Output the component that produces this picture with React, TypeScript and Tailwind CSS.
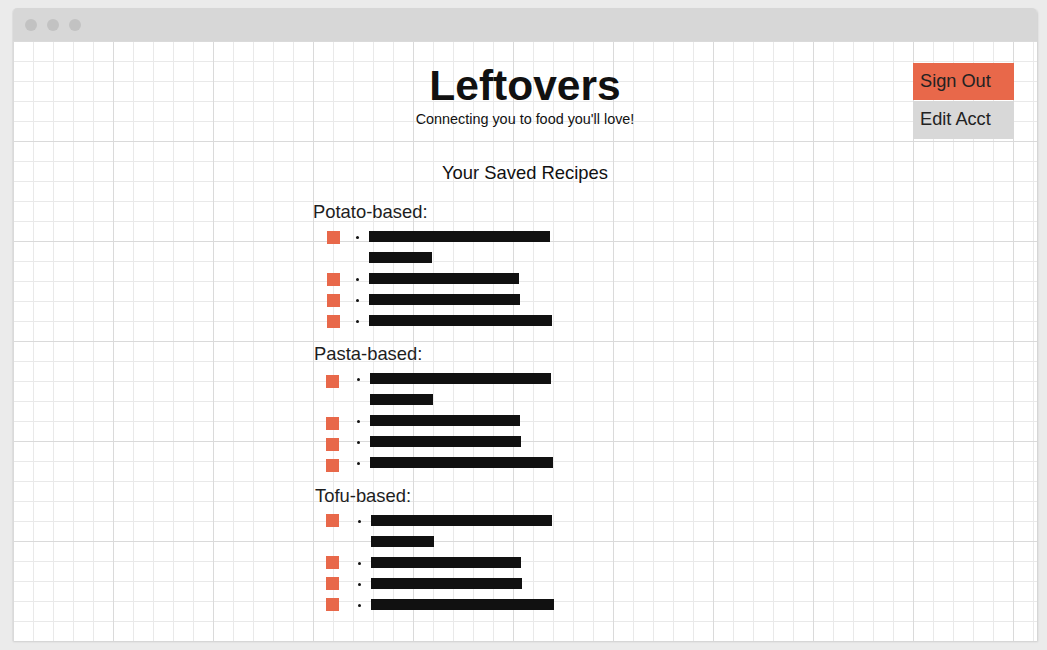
import React from 'react';

type Section = {
  title: string;
  shift: string;
  boxLeft: string;
  boxTop: string;
};

const sections: Section[] = [
  { title: 'Potato-based:', shift: 'ml-0', boxLeft: 'ml-[14px]', boxTop: 'mt-[5px]' },
  { title: 'Pasta-based:', shift: 'ml-[1px]', boxLeft: 'ml-[12px]', boxTop: 'mt-[7px]' },
  { title: 'Tofu-based:', shift: 'ml-[2px]', boxLeft: 'ml-[11px]', boxTop: 'mt-[4px]' },
];

// widths of the redacted text lines, one array per list item
const items: number[][] = [[181, 63], [150], [151], [183]];

function Bar({ w }: { w: number }) {
  return (
    <div className="flex h-[21px] items-center">
      <div className="h-[11px] bg-[#111]" style={{ width: w }} />
    </div>
  );
}

function RecipeSection({ s }: { s: Section }) {
  return (
    <div className={s.shift}>
      <h3 className="h-[22px] pt-[1px] text-[18.4px] leading-[21px] text-[#1e1e1e]">{s.title}</h3>
      <ul className="mt-[4px]">
        {items.map((lines, i) => (
          <li key={i} className="flex items-start">
            <div className="w-[43px] shrink-0">
              <div className={`h-[13px] w-[13px] bg-[#e8684a] ${s.boxLeft} ${s.boxTop}`} />
            </div>
            <span className="mt-[10px] h-[3px] w-[3px] shrink-0 rounded-full bg-[#111]" />
            <div className="ml-[10px] flex flex-col">
              {lines.map((w, j) => (
                <Bar key={j} w={w} />
              ))}
            </div>
          </li>
        ))}
      </ul>
    </div>
  );
}

export default function App() {
  return (
    <div className="h-[650px] w-[1047px] overflow-hidden bg-[#ebebeb] pl-[12px] pt-[8px] font-['Liberation_Sans',Arial,sans-serif] text-[#111]">
      <div className="w-[1025px] overflow-hidden rounded-t-[5px] border-l border-[#dedede] shadow-[1px_1px_2px_rgba(0,0,0,0.12)]">
        {/* title bar */}
        <div className="flex h-[33px] items-center gap-[10px] bg-[#d7d7d7] pl-[12px]">
          <span className="h-[12px] w-[12px] rounded-full bg-[#c2c2c2]" />
          <span className="h-[12px] w-[12px] rounded-full bg-[#c2c2c2]" />
          <span className="h-[12px] w-[12px] rounded-full bg-[#c2c2c2]" />
        </div>

        {/* page */}
        <div className="h-[600px] w-[1024px] bg-white bg-[linear-gradient(to_right,#dadada_1px,transparent_1px),linear-gradient(to_bottom,#dadada_1px,transparent_1px),linear-gradient(to_right,#e9e9e9_1px,transparent_1px),linear-gradient(to_bottom,#e9e9e9_1px,transparent_1px)] bg-[size:100px_100px,100px_100px,20px_20px,20px_20px]">
          <header className="grid grid-cols-[1fr_auto_1fr] items-start">
            <div />
            <div className="flex flex-col items-center pt-[20px]">
              <h1 className="text-[42.5px] font-bold leading-[49px] text-[#111]">Leftovers</h1>
              <p className="text-[14.4px] leading-[18px] text-[#111]">
                Connecting you to food you'll love!
              </p>
            </div>
            <div className="flex flex-col items-end gap-px pr-[23px] pt-[22px]">
              <button className="flex h-[37px] w-[101px] items-center bg-[#e8684a] pl-[7px] text-[18.2px] text-[#222]">
                Sign Out
              </button>
              <button className="flex h-[38px] w-[101px] items-center bg-[#d8d8d8] pl-[7px] text-[18.2px] text-[#222]">
                Edit Acct
              </button>
            </div>
          </header>

          <h2 className="mt-[23px] h-[21px] text-center text-[18.4px] leading-[21px] text-[#111]">
            Your Saved Recipes
          </h2>

          <div className="mt-[17px] flex flex-col gap-[11px] pl-[300px]">
            {sections.map((s) => (
              <RecipeSection key={s.title} s={s} />
            ))}
          </div>
        </div>
      </div>
    </div>
  );
}
